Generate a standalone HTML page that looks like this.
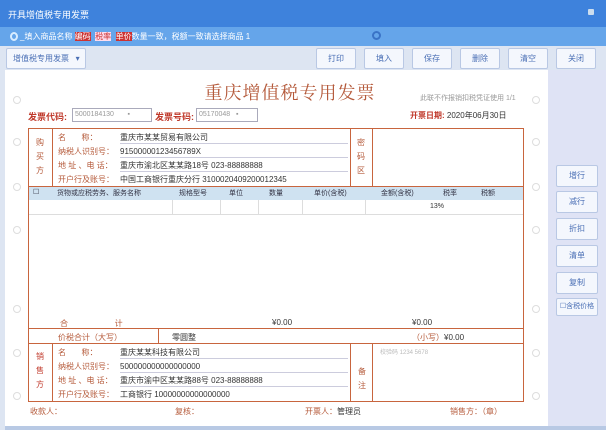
<!DOCTYPE html>
<html><head><meta charset="utf-8"><style>
*{margin:0;padding:0;box-sizing:border-box}
body{width:606px;height:430px;overflow:hidden;background:#dfe4f4;font-family:"Liberation Sans","Noto Sans CJK SC",sans-serif;font-size:9px;color:#333;position:relative}
.a{position:absolute}
.btn{position:absolute;background:#f4f7fd;border:1px solid #b9c8e4;border-radius:2px;color:#4a6fb5;font-size:8px;text-align:center;line-height:20px;height:21px}
.rb{position:absolute;left:556px;width:42px;height:22px;background:#f4f7fd;border:1px solid #b9c8e4;border-radius:2px;color:#4a6fb5;font-size:8px;text-align:center;line-height:20px}
.o{border:1px solid #c8653e}
.lbl{color:#b55a3a;font-size:8px}
.ln{position:absolute;border-bottom:1px solid #ccd;}
.circ{position:absolute;width:8px;height:8px;border:1px solid #ddd;border-radius:50%}
.hd{position:absolute;top:1px;font-size:7px;color:#334;white-space:nowrap}
</style></head><body>
<div class="a" style="left:0;top:0;width:606px;height:27px;background:#3e82dc"></div>
<div class="a" style="left:8px;top:8px;color:#fff;font-size:9px">开具增值税专用发票</div>
<div class="a" style="left:588px;top:9px;width:6px;height:6px;background:#cde;border-radius:1px"></div>
<div class="a" style="left:0;top:27px;width:606px;height:19px;background:#65a5ea"></div>
<div class="a" style="left:10px;top:32px;width:8px;height:9px;border:2px solid #d8ecff;border-radius:50%"></div>
<div class="a" style="left:20px;top:31px;color:#fff;font-size:8px">_填入商品名称 <span style="background:#c33;color:#fff">编码</span> &nbsp;<span style="color:#c33;background:#fde">税率</span> &nbsp;<span style="background:#c33">单价</span>数量一致，税额一致请选择商品 1</div>
<div class="a" style="left:372px;top:31px;width:9px;height:9px;border:2px solid #3a73c6;border-radius:50%"></div>
<div class="a" style="left:0;top:46px;width:606px;height:384px;background:#dde5f2"></div>
<div class="btn" style="left:6px;top:48px;width:80px;text-align:left;padding-left:6px">增值税专用发票 &nbsp; ▾</div>
<div class="btn" style="left:316px;top:48px;width:40px">打印</div>
<div class="btn" style="left:364px;top:48px;width:40px">填入</div>
<div class="btn" style="left:412px;top:48px;width:40px">保存</div>
<div class="btn" style="left:460px;top:48px;width:40px">删除</div>
<div class="btn" style="left:508px;top:48px;width:40px">清空</div>
<div class="btn" style="left:556px;top:48px;width:40px">关闭</div>
<div class="a" style="left:548px;top:70px;width:58px;height:356px;background:#dfe3f5"></div>
<div class="a" style="left:5px;top:70px;width:543px;height:356px;background:#fff"></div>
<div class="a" style="left:5px;top:426px;width:601px;height:4px;background:#b8c9e4"></div>
<div class="a" style="left:180px;top:79px;width:220px;text-align:center;color:#b4593a;font-family:'Noto Serif CJK SC',serif;font-size:18px;letter-spacing:1px;white-space:nowrap">重庆增值税专用发票</div>
<div class="a" style="left:420px;top:93px;color:#999;font-size:7px">此联不作报销扣税凭证使用 1/1</div>
<div class="a" style="left:28px;top:110px;color:#c0392b;font-weight:bold;font-size:9px">发票代码:</div>
<div class="a o" style="left:72px;top:108px;width:80px;height:14px;border-color:#aab;font-size:7px;color:#999;padding-left:2px;line-height:12px">5000184130 &nbsp; &nbsp; &nbsp; ▪</div>
<div class="a" style="left:155px;top:110px;color:#c0392b;font-weight:bold;font-size:9px">发票号码:</div>
<div class="a o" style="left:196px;top:108px;width:62px;height:14px;border-color:#aab;font-size:7px;color:#999;padding-left:2px;line-height:12px">05170048 &nbsp; ▪</div>
<div class="a" style="left:410px;top:110px;font-size:8px"><span style="color:#c0392b;font-weight:bold">开票日期:</span> 2020年06月30日</div>
<div class="a o" style="left:28px;top:128px;width:496px;height:274px"></div>
<div class="a" style="left:52px;top:128px;width:1px;height:58px;background:#c8653e"></div>
<div class="a" style="left:350px;top:128px;width:1px;height:58px;background:#c8653e"></div>
<div class="a" style="left:372px;top:128px;width:1px;height:58px;background:#c8653e"></div>
<div class="a" style="left:28px;top:186px;width:496px;height:1px;background:#c8653e"></div>
<div class="a lbl" style="left:36px;top:136px;line-height:14px;width:10px">购<br>买<br>方</div>
<div class="a lbl" style="left:58px;top:131px;line-height:14px">名 &nbsp; &nbsp; &nbsp; 称：<br>纳税人识别号：<br>地 址 、电 话：<br>开户行及账号：</div>
<div class="a" style="left:120px;top:131px;line-height:14px;font-size:8px">重庆市某某贸易有限公司<br>91500000123456789X<br>重庆市渝北区某某路18号 023-88888888<br>中国工商银行重庆分行 3100020409200012345</div>
<div class="ln" style="left:120px;top:143px;width:228px"></div><div class="ln" style="left:120px;top:157px;width:228px"></div><div class="ln" style="left:120px;top:171px;width:228px"></div>
<div class="a lbl" style="left:357px;top:136px;line-height:14px">密<br>码<br>区</div>
<div class="a" style="left:29px;top:187px;width:494px;height:13px;background:#cfe2f1"></div>
<div class="a" style="left:29px;top:187px;width:494px;height:13px">
<span class="hd" style="left:4px">☐</span><span class="hd" style="left:28px">货物或应税劳务、服务名称</span><span class="hd" style="left:150px">规格型号</span><span class="hd" style="left:200px">单位</span><span class="hd" style="left:240px">数量</span><span class="hd" style="left:285px">单价(含税)</span><span class="hd" style="left:352px">金额(含税)</span><span class="hd" style="left:414px">税率</span><span class="hd" style="left:452px">税额</span></div>
<div class="a" style="left:29px;top:214px;width:494px;height:1px;background:#ddd"></div>
<div class="a" style="left:172px;top:200px;width:1px;height:14px;background:#ddd"></div>
<div class="a" style="left:220px;top:200px;width:1px;height:14px;background:#ddd"></div>
<div class="a" style="left:258px;top:200px;width:1px;height:14px;background:#ddd"></div>
<div class="a" style="left:302px;top:200px;width:1px;height:14px;background:#ddd"></div>
<div class="a" style="left:365px;top:200px;width:1px;height:14px;background:#ddd"></div>
<div class="a" style="left:430px;top:203px;font-size:7px">13%</div>
<div class="a" style="left:60px;top:318px;color:#b55a3a;font-size:8px">合 &nbsp; &nbsp; &nbsp; &nbsp; &nbsp; &nbsp; &nbsp; &nbsp; &nbsp; &nbsp; 计</div>
<div class="a" style="left:272px;top:318px;font-size:8px">¥0.00</div>
<div class="a" style="left:412px;top:318px;font-size:8px">¥0.00</div>
<div class="a" style="left:28px;top:328px;width:496px;height:1px;background:#c8653e"></div>
<div class="a" style="left:28px;top:343px;width:496px;height:1px;background:#c8653e"></div>
<div class="a" style="left:158px;top:328px;width:1px;height:15px;background:#c8653e"></div>
<div class="a lbl" style="left:58px;top:332px">价税合计（大写）</div>
<div class="a" style="left:172px;top:332px;font-size:8px">零圆整</div>
<div class="a" style="left:412px;top:332px;font-size:8px"><span class="lbl">（小写）</span>¥0.00</div>
<div class="a" style="left:52px;top:343px;width:1px;height:59px;background:#c8653e"></div>
<div class="a" style="left:350px;top:343px;width:1px;height:59px;background:#c8653e"></div>
<div class="a" style="left:372px;top:343px;width:1px;height:59px;background:#c8653e"></div>
<div class="a lbl" style="left:36px;top:350px;line-height:14px;color:#c0392b">销<br>售<br>方</div>
<div class="a lbl" style="left:58px;top:346px;line-height:14px">名 &nbsp; &nbsp; &nbsp; 称：<br>纳税人识别号：<br>地 址 、电 话：<br>开户行及账号：</div>
<div class="a" style="left:120px;top:346px;line-height:14px;font-size:8px">重庆某某科技有限公司<br>500000000000000000<br>重庆市渝中区某某路88号 023-88888888<br>工商银行 10000000000000000</div>
<div class="ln" style="left:120px;top:358px;width:228px"></div><div class="ln" style="left:120px;top:372px;width:228px"></div><div class="ln" style="left:120px;top:386px;width:228px"></div>
<div class="a lbl" style="left:358px;top:365px;line-height:14px">备<br>注</div>
<div class="a" style="left:380px;top:347px;color:#bbb;font-size:6px">校验码 1234 5678</div>
<div class="a lbl" style="left:30px;top:406px">收款人：</div>
<div class="a lbl" style="left:175px;top:406px">复核：</div>
<div class="a lbl" style="left:305px;top:406px">开票人：<span style="color:#333">管理员</span></div>
<div class="a lbl" style="left:450px;top:406px">销售方：（章）</div>
<div class="circ" style="left:13px;top:96px"></div><div class="circ" style="left:13px;top:138px"></div><div class="circ" style="left:13px;top:183px"></div><div class="circ" style="left:13px;top:226px"></div><div class="circ" style="left:13px;top:305px"></div><div class="circ" style="left:13px;top:349px"></div><div class="circ" style="left:13px;top:392px"></div>
<div class="circ" style="left:532px;top:96px"></div><div class="circ" style="left:532px;top:138px"></div><div class="circ" style="left:532px;top:183px"></div><div class="circ" style="left:532px;top:226px"></div><div class="circ" style="left:532px;top:305px"></div><div class="circ" style="left:532px;top:349px"></div><div class="circ" style="left:532px;top:392px"></div>
<div class="rb" style="top:165px">增行</div>
<div class="rb" style="top:191px">减行</div>
<div class="rb" style="top:218px">折扣</div>
<div class="rb" style="top:245px">清单</div>
<div class="rb" style="top:272px">复制</div>
<div class="rb" style="top:298px;height:18px;line-height:16px;font-size:7px">☐含税价格</div>
</body></html>
